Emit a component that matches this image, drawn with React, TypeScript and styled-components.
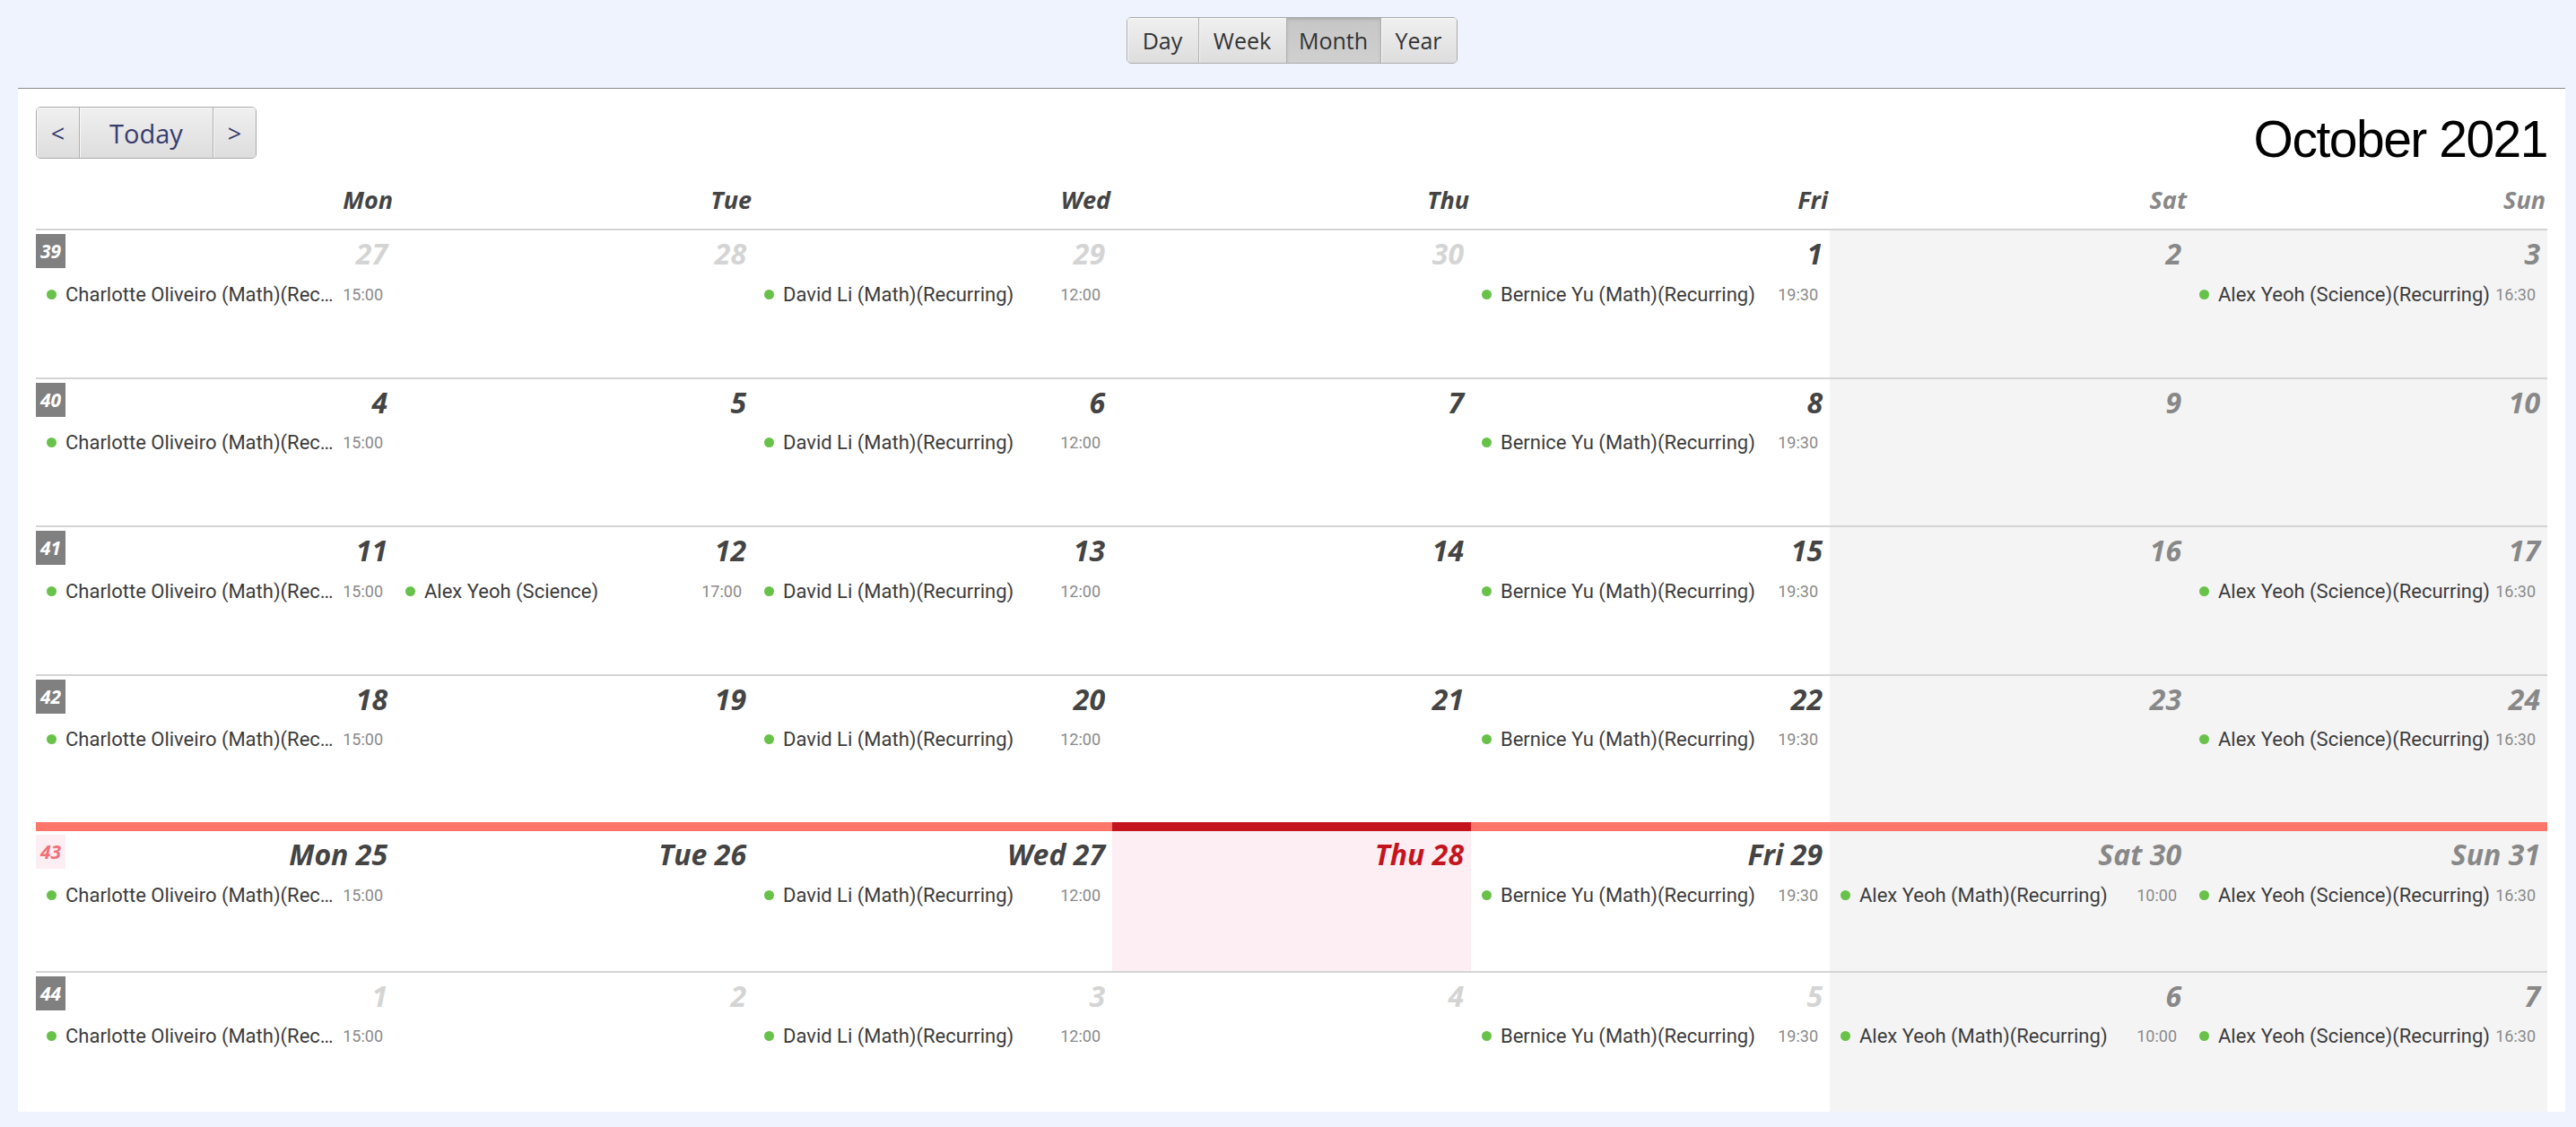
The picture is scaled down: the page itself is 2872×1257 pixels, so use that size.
import React from "react";
import styled, { createGlobalStyle } from "styled-components";

const GlobalStyle = createGlobalStyle`
  html, body {
    margin: 0;
    padding: 0;
    background: #eef3fe;
  }
  body {
    font-family: Roboto, "Liberation Sans", sans-serif;
  }
`;

const Page = styled.div`
  padding: 0 12px 0 20px;
`;

const TopBar = styled.div`
  height: 98px;
  box-sizing: border-box;
  padding-top: 19px;
  display: flex;
  justify-content: center;
`;

const Segmented = styled.div`
  display: flex;
  height: 52px;
  box-sizing: border-box;
  border: 1px solid #aaaaaa;
  border-radius: 5px;
  overflow: hidden;
`;

const SegButton = styled.button<{ $active?: boolean; $w: number }>`
  width: ${(p) => p.$w}px;
  height: 100%;
  border: none;
  border-left: 1px solid #b0b0b0;
  box-shadow: ${(p) =>
    p.$active ? "inset 0 2px 3px rgba(0,0,0,0.12)" : "inset 1px 1px 0 #f8f8f8"};
  background: ${(p) =>
    p.$active
      ? "linear-gradient(#c6c6c6, #d0d0d0)"
      : "linear-gradient(#f0f0f0, #dddddd)"};
  font-family: "Open Sans", "DejaVu Sans", sans-serif;
  font-size: 25px;
  color: #333;
  padding: 0;
  &:first-child {
    border-left: none;
  }
`;

const Panel = styled.div`
  height: 1142px;
  box-sizing: border-box;
  background: #fff;
  border-top: 1px solid #8a8a8a;
  padding: 20px 20px 0;
  display: flex;
  flex-direction: column;
`;

const Toolbar = styled.div`
  height: 58px;
  flex: none;
  display: flex;
  justify-content: space-between;
  align-items: flex-start;
`;

const NavGroup = styled(Segmented)`
  height: 58px;
`;

const NavButton = styled(SegButton)`
  font-size: ${(p) => (p.$w > 100 ? 29 : 27)}px;
  color: #383c6c;
`;

const Title = styled.div`
  align-self: flex-end;
  font-family: "Liberation Sans", Arial, sans-serif;
  font-size: 57px;
  line-height: 44px;
  letter-spacing: -1.5px;
  color: #000;
`;

const HeaderRow = styled.div`
  height: 78px;
  flex: none;
  box-sizing: border-box;
  padding-bottom: 14px;
  display: grid;
  grid-template-columns: repeat(7, 1fr);
  align-items: end;
`;

const DayName = styled.div<{ $weekend: boolean }>`
  text-align: right;
  padding-right: 2px;
  font-family: "Open Sans", sans-serif;
  font-weight: 700;
  font-style: italic;
  font-size: 27px;
  line-height: 36px;
  color: ${(p) => (p.$weekend ? "#888888" : "#444444")};
`;

const Grid = styled.div`
  flex: 1;
  min-height: 0;
  overflow: hidden;
`;

const WeekRow = styled.div`
  height: 165.5px;
  display: grid;
  grid-template-columns: repeat(7, 1fr);
`;

const Cell = styled.div<{ $weekend: boolean; $today: boolean; $current: boolean }>`
  box-sizing: border-box;
  height: 100%;
  min-width: 0;
  display: flex;
  flex-direction: column;
  border-top: ${(p) => (p.$current ? 10 : 2)}px solid
    ${(p) => (p.$today ? "#c4151f" : p.$current ? "#ff7569" : "#d4d4d4")};
  background: ${(p) => (p.$today ? "#fdeef3" : p.$weekend ? "#f4f4f4" : "#fff")};
`;

const CellHead = styled.div`
  display: flex;
  align-items: flex-start;
  padding: 4px 8px 0 0;
`;

const WeekBadge = styled.div<{ $current: boolean }>`
  width: 33px;
  height: 38px;
  display: flex;
  align-items: center;
  justify-content: center;
  background: ${(p) => (p.$current ? "#fdeef3" : "#808080")};
  color: ${(p) => (p.$current ? "#f2707a" : "#fff")};
  font-family: "Open Sans", sans-serif;
  font-weight: 700;
  font-style: italic;
  font-size: 21px;
`;

const DateLabel = styled.div<{ $color: string }>`
  margin-left: auto;
  margin-top: 2px;
  font-family: "Open Sans", sans-serif;
  font-weight: 700;
  font-style: italic;
  font-size: 32px;
  line-height: 40px;
  color: ${(p) => p.$color};
`;

const EventList = styled.div`
  margin-top: 10px;
  padding: 0 13px 0 12px;
  display: flex;
  flex-direction: column;
`;

const EventRow = styled.div`
  display: flex;
  align-items: center;
  height: 30px;
`;

const Dot = styled.span`
  flex: none;
  width: 11px;
  height: 11px;
  border-radius: 50%;
  background: #68c24a;
  margin-right: 10px;
`;

const EventName = styled.span`
  flex: 1;
  min-width: 0;
  overflow: hidden;
  white-space: nowrap;
  text-overflow: ellipsis;
  font-size: 22px;
  color: #3c3c3c;
`;

const EventTime = styled.span`
  flex: none;
  margin-left: 5px;
  font-size: 18px;
  color: #8a8a8a;
`;

type CalEvent = { title: string; time: string };

const DAY_NAMES = ["Mon", "Tue", "Wed", "Thu", "Fri", "Sat", "Sun"];
const CURRENT_WEEK = 4;
const TODAY_COL = 3;

const charlotte = { title: "Charlotte Oliveiro (Math)(Recurring)", time: "15:00" };
const david = { title: "David Li (Math)(Recurring)", time: "12:00" };
const bernice = { title: "Bernice Yu (Math)(Recurring)", time: "19:30" };
const alexSci = { title: "Alex Yeoh (Science)(Recurring)", time: "16:30" };
const alexMath = { title: "Alex Yeoh (Math)(Recurring)", time: "10:00" };

function eventsFor(week: number, col: number): CalEvent[] {
  if (col === 0) return [charlotte];
  if (col === 1 && week === 2) return [{ title: "Alex Yeoh (Science)", time: "17:00" }];
  if (col === 2) return [david];
  if (col === 4) return [bernice];
  if (col === 5 && week >= 4) return [alexMath];
  if (col === 6 && week !== 1) return [alexSci];
  return [];
}

function buildWeeks() {
  const weeks: { date: number; inMonth: boolean }[][] = [];
  const d = new Date(2021, 8, 27);
  for (let w = 0; w < 6; w++) {
    const row = [];
    for (let c = 0; c < 7; c++) {
      row.push({ date: d.getDate(), inMonth: d.getMonth() === 9 });
      d.setDate(d.getDate() + 1);
    }
    weeks.push(row);
  }
  return weeks;
}

export default function App() {
  const weeks = buildWeeks();

  return (
    <>
      <GlobalStyle />
      <Page>
        <TopBar>
          <Segmented>
            <SegButton $w={79}>Day</SegButton>
            <SegButton $w={98}>Week</SegButton>
            <SegButton $w={105} $active>
              Month
            </SegButton>
            <SegButton $w={85}>Year</SegButton>
          </Segmented>
        </TopBar>
        <Panel>
          <Toolbar>
            <NavGroup>
              <NavButton $w={47}>&lt;</NavButton>
              <NavButton $w={149}>Today</NavButton>
              <NavButton $w={48}>&gt;</NavButton>
            </NavGroup>
            <Title>October 2021</Title>
          </Toolbar>
          <HeaderRow>
            {DAY_NAMES.map((n, i) => (
              <DayName key={n} $weekend={i >= 5}>
                {n}
              </DayName>
            ))}
          </HeaderRow>
          <Grid>
            {weeks.map((row, w) => {
              const current = w === CURRENT_WEEK;
              return (
                <WeekRow key={w}>
                  {row.map((day, c) => {
                    const weekend = c >= 5;
                    const today = current && c === TODAY_COL;
                    const color = today
                      ? "#c4151f"
                      : weekend
                      ? "#888888"
                      : day.inMonth
                      ? "#444444"
                      : "#d4d4d4";
                    return (
                      <Cell key={c} $weekend={weekend} $today={today} $current={current}>
                        <CellHead>
                          {c === 0 && <WeekBadge $current={current}>{39 + w}</WeekBadge>}
                          <DateLabel $color={color}>
                            {current ? `${DAY_NAMES[c]} ${day.date}` : day.date}
                          </DateLabel>
                        </CellHead>
                        <EventList>
                          {eventsFor(w, c).map((ev) => (
                            <EventRow key={ev.title}>
                              <Dot />
                              <EventName>{ev.title}</EventName>
                              <EventTime>{ev.time}</EventTime>
                            </EventRow>
                          ))}
                        </EventList>
                      </Cell>
                    );
                  })}
                </WeekRow>
              );
            })}
          </Grid>
        </Panel>
      </Page>
    </>
  );
}
